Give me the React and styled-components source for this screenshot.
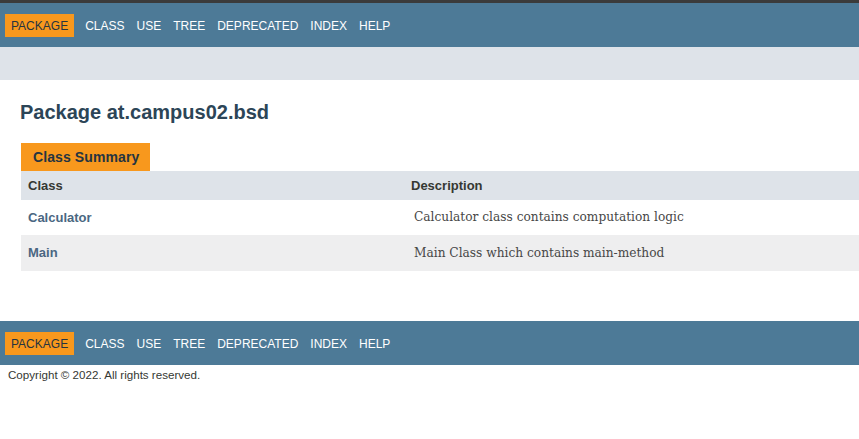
import React from 'react'
import styled, { createGlobalStyle } from 'styled-components'

const GlobalStyle = createGlobalStyle`
  body {
    margin: 0;
    background: #fff;
    font-family: 'Liberation Sans', Arial, sans-serif;
    color: #353833;
  }
`

const TopStrip = styled.div`
  height: 3px;
  background: #3b3b3b;
`

const NavBar = styled.nav`
  background-color: #4d7a97;
  height: 44px;
  display: flex;
  align-items: center;
  padding-left: 5px;
`

const NavList = styled.ul`
  display: flex;
  align-items: center;
  margin: 0;
  padding: 0;
  list-style: none;
`

const NavItem = styled.li`
  font-size: 12px;
  text-transform: uppercase;
  padding: 6px 6px 5px;
  line-height: 12px;
  color: ${p => (p.active ? '#253441' : '#ffffff')};
  background: ${p => (p.active ? '#f8981d' : 'transparent')};
  margin-right: ${p => (p.active ? '5px' : '0')};
`

const SubNav = styled.div`
  height: 33px;
  background-color: #dee3e9;
`

const Main = styled.main`
  padding: 0 0 0 21px;
`

const Title = styled.h1`
  margin: 0;
  padding: 21px 0 0 0;
  margin-left: -1px;
  font-size: 20px;
  line-height: 22px;
  font-weight: bold;
  color: #2c4557;
`

const Summary = styled.div`
  margin-top: 20px;
`

const Caption = styled.div`
  display: inline-block;
  background: #f8981d;
  color: #253441;
  font-weight: bold;
  font-size: 14px;
  line-height: 16px;
  letter-spacing: 0.1px;
  padding: 6px 11px 6px 12px;
`

const Table = styled.div`
  display: grid;
  grid-template-columns: 382px 1fr;
`

const Row = styled.div`
  display: contents;
`

const Cell = styled.div`
  box-sizing: border-box;
  background: ${p => p.bg};
  height: ${p => p.h}px;
  display: flex;
  align-items: center;
  padding-left: ${p => p.pl}px;
  padding-bottom: 1px;
`

const HeadText = styled.span`
  font-size: 13px;
  font-weight: bold;
  color: #353833;
`

const ClassLink = styled.a`
  font-size: 13px;
  font-weight: bold;
  color: #4a6782;
  text-decoration: none;
`

const Desc = styled.span`
  font-family: 'DejaVu Serif', Georgia, 'Liberation Serif', serif;
  font-size: 12.2px;
  color: #474747;
`

const Footer = styled.footer`
  margin-top: 50px;
`

const Copyright = styled.p`
  margin: 3px 0 0 8px;
  font-size: 11.6px;
  line-height: 14px;
  color: #353833;
`

const navItems = ['Package', 'Class', 'Use', 'Tree', 'Deprecated', 'Index', 'Help']

const classes = [
  { name: 'Calculator', desc: 'Calculator class contains computation logic', bg: '#ffffff', h: 35 },
  { name: 'Main', desc: 'Main Class which contains main-method', bg: '#eeeeef', h: 36 }
]

const Nav = () => (
  <NavBar>
    <NavList>
      {navItems.map(item => (
        <NavItem key={item} active={item === 'Package'}>
          {item}
        </NavItem>
      ))}
    </NavList>
  </NavBar>
)

const App = () => {
  return (
    <>
      <GlobalStyle />
      <TopStrip />
      <Nav />
      <SubNav />
      <Main>
        <Title>Package at.campus02.bsd</Title>
        <Summary>
          <Caption>Class Summary</Caption>
          <Table>
            <Row>
              <Cell bg='#dee3e9' h={29} pl={7}>
                <HeadText>Class</HeadText>
              </Cell>
              <Cell bg='#dee3e9' h={29} pl={8}>
                <HeadText>Description</HeadText>
              </Cell>
            </Row>
            {classes.map(c => (
              <Row key={c.name}>
                <Cell bg={c.bg} h={c.h} pl={7}>
                  <ClassLink href='#'>{c.name}</ClassLink>
                </Cell>
                <Cell bg={c.bg} h={c.h} pl={11}>
                  <Desc>{c.desc}</Desc>
                </Cell>
              </Row>
            ))}
          </Table>
        </Summary>
      </Main>
      <Footer>
        <Nav />
        <Copyright>Copyright © 2022. All rights reserved.</Copyright>
      </Footer>
    </>
  )
}

export default App
